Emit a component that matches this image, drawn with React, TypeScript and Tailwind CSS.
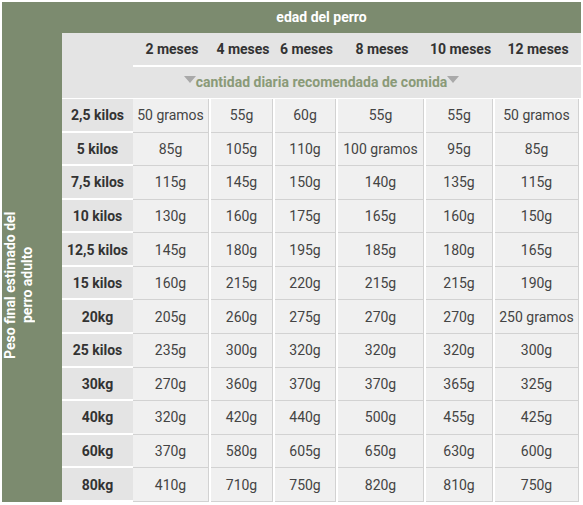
import React from "react";

const cols = [78, 64, 63, 88, 69, 86];
const months = ["2 meses", "4 meses", "6 meses", "8 meses", "10 meses", "12 meses"];
const rows: [string, string[]][] = [
  ["2,5 kilos", ["50 gramos", "55g", "60g", "55g", "55g", "50 gramos"]],
  ["5 kilos", ["85g", "105g", "110g", "100 gramos", "95g", "85g"]],
  ["7,5 kilos", ["115g", "145g", "150g", "140g", "135g", "115g"]],
  ["10 kilos", ["130g", "160g", "175g", "165g", "160g", "150g"]],
  ["12,5 kilos", ["145g", "180g", "195g", "185g", "180g", "165g"]],
  ["15 kilos", ["160g", "215g", "220g", "215g", "215g", "190g"]],
  ["20kg", ["205g", "260g", "275g", "270g", "270g", "250 gramos"]],
  ["25 kilos", ["235g", "300g", "320g", "320g", "320g", "300g"]],
  ["30kg", ["270g", "360g", "370g", "370g", "365g", "325g"]],
  ["40kg", ["320g", "420g", "440g", "500g", "455g", "425g"]],
  ["60kg", ["370g", "580g", "605g", "650g", "630g", "600g"]],
  ["80kg", ["410g", "710g", "750g", "820g", "810g", "750g"]],
];

function Tri() {
  return (
    <span className="inline-block w-0 h-0 border-l-[6px] border-r-[6px] border-t-[7px] border-l-transparent border-r-transparent border-t-[#a9a9a9] -translate-y-[3px]" />
  );
}

export default function App() {
  return (
    <div
      className="w-[583px] h-[505px] bg-white p-[2px] text-[14px]"
      style={{ fontFamily: "Roboto, 'Liberation Sans', sans-serif" }}
    >
      <div className="flex w-[579px]">
        <div className="w-[60px] shrink-0 bg-[#7c8b6f] pt-[209px]">
          <div className="[writing-mode:vertical-rl] rotate-180 text-center font-bold text-white leading-[17px] h-[148px]">
            Peso final estimado del
            <br />
            perro adulto
          </div>
        </div>
        <div className="w-[519px] flex flex-col">
          <div className="h-[31px] bg-[#7c8b6f] flex items-center justify-center font-bold text-white">
            edad del perro
          </div>
          <div className="bg-[#e4e4e4]">
            <div className="flex h-[34px]">
              <div className="w-[71px] shrink-0" />
              {months.map((m, i) => (
                <div
                  key={m}
                  style={{ width: cols[i] }}
                  className="shrink-0 border-b-2 border-white flex items-center justify-center font-bold text-[#333]"
                >
                  {m}
                </div>
              ))}
            </div>
            <div className="h-[31px] flex items-center justify-center font-bold text-[#8a9a78]">
              <Tri />
              cantidad diaria recomendada de comida
              <Tri />
            </div>
          </div>
          <div className="h-px bg-white" />
          {rows.map(([label, vals]) => (
            <div key={label} className="flex h-[33.58px]">
              <div className="w-[71px] shrink-0 bg-[#e4e4e4] border-b-2 border-white flex items-center justify-center pt-[2px] font-bold text-[#333]">
                {label}
              </div>
              {vals.map((v, i) => (
                <div
                  key={i}
                  style={{ width: cols[i] }}
                  className="shrink-0 border-r-2 border-white flex"
                >
                  <div className="flex-1 bg-[#f0f0f0] border-r border-b border-[#d2d2d2] flex items-center justify-center pt-[1px] text-[#444]">
                    {v}
                  </div>
                </div>
              ))}
            </div>
          ))}
        </div>
      </div>
    </div>
  );
}
